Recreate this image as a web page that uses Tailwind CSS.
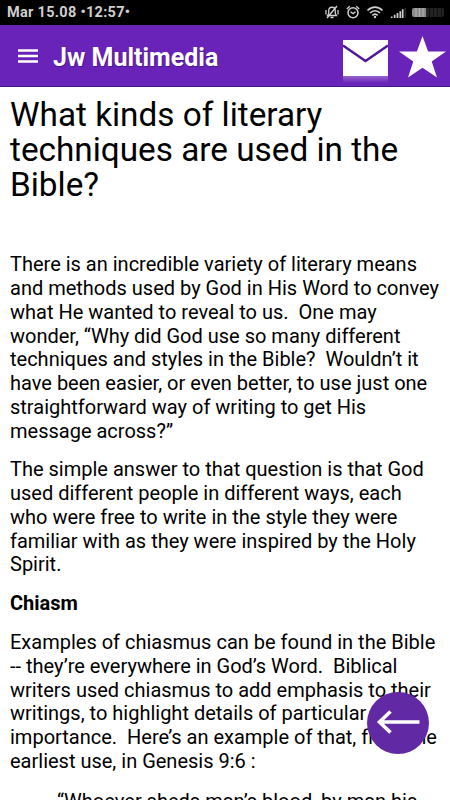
<!DOCTYPE html>
<html lang="en">
<head>
    <meta charset="UTF-8">
    <meta name="viewport" content="width=device-width, initial-scale=1.0">
    <title>Jw Multimedia</title>
    <script src="https://cdn.jsdelivr.net/npm/@tailwindcss/browser@4"></script>
</head>
<body class="bg-white text-black font-['Roboto',sans-serif] h-[800px] overflow-hidden">
    <!-- Status bar -->
    <div class="flex items-center justify-between h-[25px] bg-black text-[#cfcfcf] pl-[7px] pr-[6px]">
        <span class="text-[14.5px] font-bold tracking-[0.3px] whitespace-nowrap pt-[1px]">Mar 15.08 •12:57•</span>
        <svg class="w-[120px] h-[25px]" viewBox="324 0 120 25" fill="none" stroke="#cfcfcf">
            <!-- Muted bell -->
            <path d="M327.500 15.500h9l-1.200-2V11c0-5-6.600-5-6.600 0v2.500zM330.500 17.500h3" stroke-width="1.300"/>
            <path d="M327 18l10-12" stroke-width="1.400"/>
            <path d="M326 10v4.500M338 10v4.500" stroke-width="1.300"/>
            <!-- Alarm -->
            <circle cx="353" cy="12.800" r="5" stroke-width="1.500"/>
            <path d="M350.500 11.800l2.500 1.800 2.500-1.800M346.800 9l3-2.700M359.200 9l-3-2.700" stroke-width="1.400"/>
            <!-- Wifi -->
            <path d="M367.500 10.500c4.500-4.600 10.500-4.600 15 0M370 13c3-3 7-3 10 0M372.300 15.400c1.700-1.600 3.700-1.600 5.400 0" stroke-width="1.700"/>
            <circle cx="375" cy="17" r="1.200" fill="#cfcfcf" stroke="none"/>
            <!-- Signal -->
            <path d="M391.700 16.500v1.500M394.700 14.800v3.200M397.500 13V18M400.300 11.200v6.800M402.700 9.300V18" stroke-width="1.700"/>
            <path d="M405.300 8v10" stroke="#2a2a2a" stroke-width="1.500"/>
            <!-- Battery -->
            <rect x="412" y="8" width="32" height="9" rx="2" fill="#222" stroke="none"/>
            <path d="M414 8h12v9h-12a2 2 0 0 1-2-2v-5a2 2 0 0 1 2-2z" fill="#8c8c8c" stroke="none"/>
            <path d="M416 8v9M419.500 8v9M423 8v9" stroke="#b5b5b5" stroke-width="1"/>
            <path d="M429.500 8v9M433.500 8v9M437.500 8v9M441.500 8v9" stroke="#111" stroke-width="1"/>
        </svg>
    </div>

    <!-- App bar -->
    <header class="flex items-center h-[62px] bg-[#6a23b9] border-b border-[#4b1590] pl-[18px] pr-[4px] text-white">
        <svg class="w-5 h-[14px]" viewBox="0 0 20 14" stroke="#fff" stroke-width="2.300">
            <path d="M0 1.500h20M0 7h20M0 12.500h20"/>
        </svg>
        <h1 class="ml-[15px] text-[25px] font-bold leading-none whitespace-nowrap pt-[3px] [text-shadow:1px_1px_1px_#4b1590]">Jw Multimedia</h1>
        <svg class="ml-auto w-[45px] h-[45px] mt-[11px]" viewBox="0 0 45 45">
            <defs>
                <linearGradient id="reflection" x1="0" y1="0" x2="0" y2="1">
                    <stop offset="0" stop-color="#fff" stop-opacity=".3"/>
                    <stop offset="1" stop-color="#fff" stop-opacity="0"/>
                </linearGradient>
            </defs>
            <path d="M0 1h45v36H0z" fill="#fff"/>
            <path d="M0 6.500L22.500 22 45 6.500" fill="none" stroke="#4f1798" stroke-width="2.400"/>
            <path d="M0 37h45v7H0z" fill="url(#reflection)"/>
        </svg>
        <svg class="ml-[11px] w-[47px] h-[42px] mt-[2px]" viewBox="0 0 47 42" fill="#fff">
            <path d="M23.500 0l5.600 15.600H47L32.700 25.400 38 41.500 23.500 31.700 9 41.500l5.300-16.100L0 15.600h17.900z"/>
        </svg>
    </header>

    <!-- Article -->
    <main class="pl-[10px] pt-[10px] text-[20px] leading-[23.77px]">
        <h2 class="mb-[51.3px] text-[33.3px] leading-[35px] whitespace-pre">What kinds of literary
techniques are used in the
Bible?</h2>
        <div class="flex flex-col gap-[15px] whitespace-pre">
            <p>There is an incredible variety of literary means
and methods used by God in His Word to convey
what He wanted to reveal to us.  One may
wonder, “Why did God use so many different
techniques and styles in the Bible?  Wouldn’t it
have been easier, or even better, to use just one
straightforward way of writing to get His
message across?”</p>
            <p>The simple answer to that question is that God
used different people in different ways, each
who were free to write in the style they were
familiar with as they were inspired by the Holy
Spirit.</p>
            <p class="font-bold">Chiasm</p>
            <p>Examples of chiasmus can be found in the Bible
-- they’re everywhere in God’s Word.  Biblical
writers used chiasmus to add emphasis to their
writings, to highlight details of particular
importance.  Here’s an example of that, from the
earliest use, in Genesis 9:6 :</p>
            <blockquote class="pl-[47px] pt-px">“Whoever sheds man’s blood, by man his</blockquote>
        </div>
    </main>

    <!-- Back button -->
    <button class="fixed left-[367px] top-[692px] size-[62px] rounded-full bg-[#6129a3]">
        <svg class="size-[62px]" viewBox="0 0 62 62" fill="none" stroke="#fff" stroke-width="3.600">
            <path d="M12 30h40.500M23.500 19.500L12.500 30l11 10.500"/>
        </svg>
    </button>
</body>
</html>
